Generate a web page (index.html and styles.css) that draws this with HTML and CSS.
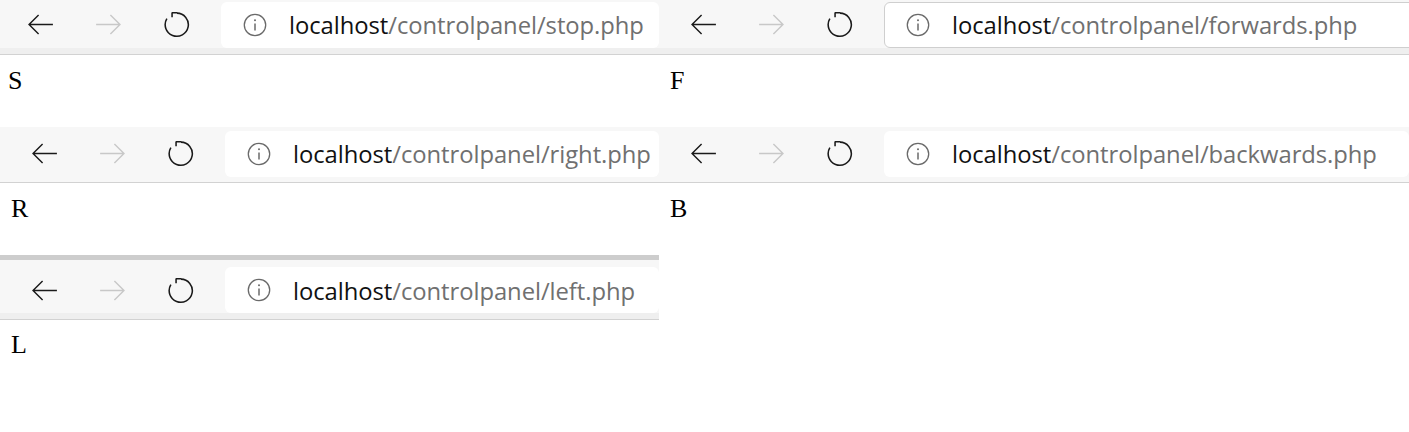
FILE: index.html
```html
<!DOCTYPE html>
<html>
<head>
<meta charset="utf-8">
<link rel="stylesheet" href="styles.css">
</head>
<body>
<div class="grid">
  <section class="win win--first">
    <div class="toolbar tb1">
      <div class="btn"><svg class="ico" viewBox="0 0 28 22"><path d="M27 11H2M12 1L2 11l10 10" fill="none" stroke="#1a1a1a" stroke-width="1.5"/></svg></div>
      <div class="btn"><svg class="ico" viewBox="0 0 28 22"><path d="M1 11h25M16 1l10 10-10 10" fill="none" stroke="#c8c8c8" stroke-width="1.5"/></svg></div>
      <div class="btn"><svg class="ico rl" viewBox="0 0 28 28"><path d="M14.5 2.2A12 12 0 1 1 4 8" fill="none" stroke="#1a1a1a" stroke-width="1.6"/><path d="M9 1.8h5.8M9.4 1.8v4.8" fill="none" stroke="#1a1a1a" stroke-width="1.6"/></svg></div>
      <div class="addr">
        <svg class="info" viewBox="0 0 24 24"><circle cx="12" cy="12" r="10.7" fill="none" stroke="#6a6a6a" stroke-width="1.3"/><path d="M12 10.5v7" stroke="#6a6a6a" stroke-width="1.5"/><circle cx="12" cy="7.3" r="1" fill="#6a6a6a"/></svg>
        <span class="url"><span class="host">localhost</span>/controlpanel/stop.php</span>
      </div>
    </div>
    <div class="page p1">S</div>
  </section>

  <section class="win">
    <div class="toolbar tb1">
      <div class="btn"><svg class="ico" viewBox="0 0 28 22"><path d="M27 11H2M12 1L2 11l10 10" fill="none" stroke="#1a1a1a" stroke-width="1.5"/></svg></div>
      <div class="btn"><svg class="ico" viewBox="0 0 28 22"><path d="M1 11h25M16 1l10 10-10 10" fill="none" stroke="#c8c8c8" stroke-width="1.5"/></svg></div>
      <div class="btn"><svg class="ico rl" viewBox="0 0 28 28"><path d="M14.5 2.2A12 12 0 1 1 4 8" fill="none" stroke="#1a1a1a" stroke-width="1.6"/><path d="M9 1.8h5.8M9.4 1.8v4.8" fill="none" stroke="#1a1a1a" stroke-width="1.6"/></svg></div>
      <div class="addr addr--focus">
        <svg class="info" viewBox="0 0 24 24"><circle cx="12" cy="12" r="10.7" fill="none" stroke="#6a6a6a" stroke-width="1.3"/><path d="M12 10.5v7" stroke="#6a6a6a" stroke-width="1.5"/><circle cx="12" cy="7.3" r="1" fill="#6a6a6a"/></svg>
        <span class="url"><span class="host">localhost</span>/controlpanel/forwards.php</span>
      </div>
    </div>
    <div class="page p1">F</div>
  </section>

  <section class="win">
    <div class="toolbar tb2">
      <div class="btn"><svg class="ico" viewBox="0 0 28 22"><path d="M27 11H2M12 1L2 11l10 10" fill="none" stroke="#1a1a1a" stroke-width="1.5"/></svg></div>
      <div class="btn"><svg class="ico" viewBox="0 0 28 22"><path d="M1 11h25M16 1l10 10-10 10" fill="none" stroke="#c8c8c8" stroke-width="1.5"/></svg></div>
      <div class="btn"><svg class="ico rl" viewBox="0 0 28 28"><path d="M14.5 2.2A12 12 0 1 1 4 8" fill="none" stroke="#1a1a1a" stroke-width="1.6"/><path d="M9 1.8h5.8M9.4 1.8v4.8" fill="none" stroke="#1a1a1a" stroke-width="1.6"/></svg></div>
      <div class="addr">
        <svg class="info" viewBox="0 0 24 24"><circle cx="12" cy="12" r="10.7" fill="none" stroke="#6a6a6a" stroke-width="1.3"/><path d="M12 10.5v7" stroke="#6a6a6a" stroke-width="1.5"/><circle cx="12" cy="7.3" r="1" fill="#6a6a6a"/></svg>
        <span class="url"><span class="host">localhost</span>/controlpanel/right.php</span>
      </div>
    </div>
    <div class="page p2">R</div>
  </section>

  <section class="win win--tall">
    <div class="toolbar tb2">
      <div class="btn"><svg class="ico" viewBox="0 0 28 22"><path d="M27 11H2M12 1L2 11l10 10" fill="none" stroke="#1a1a1a" stroke-width="1.5"/></svg></div>
      <div class="btn"><svg class="ico" viewBox="0 0 28 22"><path d="M1 11h25M16 1l10 10-10 10" fill="none" stroke="#c8c8c8" stroke-width="1.5"/></svg></div>
      <div class="btn"><svg class="ico rl" viewBox="0 0 28 28"><path d="M14.5 2.2A12 12 0 1 1 4 8" fill="none" stroke="#1a1a1a" stroke-width="1.6"/><path d="M9 1.8h5.8M9.4 1.8v4.8" fill="none" stroke="#1a1a1a" stroke-width="1.6"/></svg></div>
      <div class="addr">
        <svg class="info" viewBox="0 0 24 24"><circle cx="12" cy="12" r="10.7" fill="none" stroke="#6a6a6a" stroke-width="1.3"/><path d="M12 10.5v7" stroke="#6a6a6a" stroke-width="1.5"/><circle cx="12" cy="7.3" r="1" fill="#6a6a6a"/></svg>
        <span class="url"><span class="host">localhost</span>/controlpanel/backwards.php</span>
      </div>
    </div>
    <div class="page p2">B</div>
  </section>

  <section class="win win--last">
    <div class="toolbar tb3">
      <div class="btn"><svg class="ico" viewBox="0 0 28 22"><path d="M27 11H2M12 1L2 11l10 10" fill="none" stroke="#1a1a1a" stroke-width="1.5"/></svg></div>
      <div class="btn"><svg class="ico" viewBox="0 0 28 22"><path d="M1 11h25M16 1l10 10-10 10" fill="none" stroke="#c8c8c8" stroke-width="1.5"/></svg></div>
      <div class="btn"><svg class="ico rl" viewBox="0 0 28 28"><path d="M14.5 2.2A12 12 0 1 1 4 8" fill="none" stroke="#1a1a1a" stroke-width="1.6"/><path d="M9 1.8h5.8M9.4 1.8v4.8" fill="none" stroke="#1a1a1a" stroke-width="1.6"/></svg></div>
      <div class="addr">
        <svg class="info" viewBox="0 0 24 24"><circle cx="12" cy="12" r="10.7" fill="none" stroke="#6a6a6a" stroke-width="1.3"/><path d="M12 10.5v7" stroke="#6a6a6a" stroke-width="1.5"/><circle cx="12" cy="7.3" r="1" fill="#6a6a6a"/></svg>
        <span class="url"><span class="host">localhost</span>/controlpanel/left.php</span>
      </div>
    </div>
    <div class="page p3">L</div>
  </section>
</div>
</body>
</html>
```

FILE: styles.css
```css
* { box-sizing: border-box; }
html, body { margin: 0; padding: 0; background: #fff; }
body { width: 1409px; height: 432px; overflow: hidden; }

.grid {
  display: grid;
  grid-template-columns: 659px 750px;
  grid-template-rows: 127px 128px 177px;
}

.win { overflow: hidden; background: #fff; display: flex; flex-direction: column; }
.win--tall { grid-row: 2 / span 2; grid-column: 2; }
.win--last { grid-column: 1; grid-row: 3; border-top: 5px solid #cdcdcd; }

.toolbar {
  display: flex;
  align-items: center;
  background: #f7f7f7;
  padding-left: 10px;
  border-bottom: 1px solid #d2d2d2;
  flex-shrink: 0;
  white-space: nowrap;
}
.win--first .toolbar { padding-left: 6px; }
.tb1 { height: 55px; padding-top: 2px; padding-bottom: 7px; box-shadow: inset 0 -6px 0 #efefef; }
.tb2 { height: 56px; padding-top: 3px; padding-bottom: 5px; }
.tb3 { height: 60px; padding-top: 7px; padding-bottom: 6px; box-shadow: inset 0 -6px 0 #efefef; }

.btn {
  width: 68px;
  height: 46px;
  flex-shrink: 0;
  display: flex;
  align-items: center;
  justify-content: center;
}
.ico { width: 27px; height: 21px; display: block; }
.ico.rl { width: 27px; height: 27px; }

.addr {
  margin-left: 11px;
  height: 46px;
  flex: 1 0 auto;
  background: #fff;
  border-radius: 6px;
  display: flex;
  align-items: center;
  padding-left: 22px;
  gap: 22px;
}
.addr--focus { border: 1px solid #cfcfcf; padding-left: 21px; margin-right: -20px; }
.info { width: 24px; height: 24px; flex-shrink: 0; display: block; }

.url {
  font-family: "Open Sans", "Noto Sans", sans-serif;
  font-size: 23.8px;
  color: #707070;
  letter-spacing: -0.05px;
  padding-top: 1px;
}
.host { color: #111; }

.page {
  font-family: "Liberation Serif", "Times New Roman", serif;
  font-size: 26px;
  color: #000;
  padding-left: 11px;
}
.win--first .page { padding-left: 8px; }
.p1 { padding-top: 11px; }
.p2 { padding-top: 11px; }
.p3 { padding-top: 10px; }
```
